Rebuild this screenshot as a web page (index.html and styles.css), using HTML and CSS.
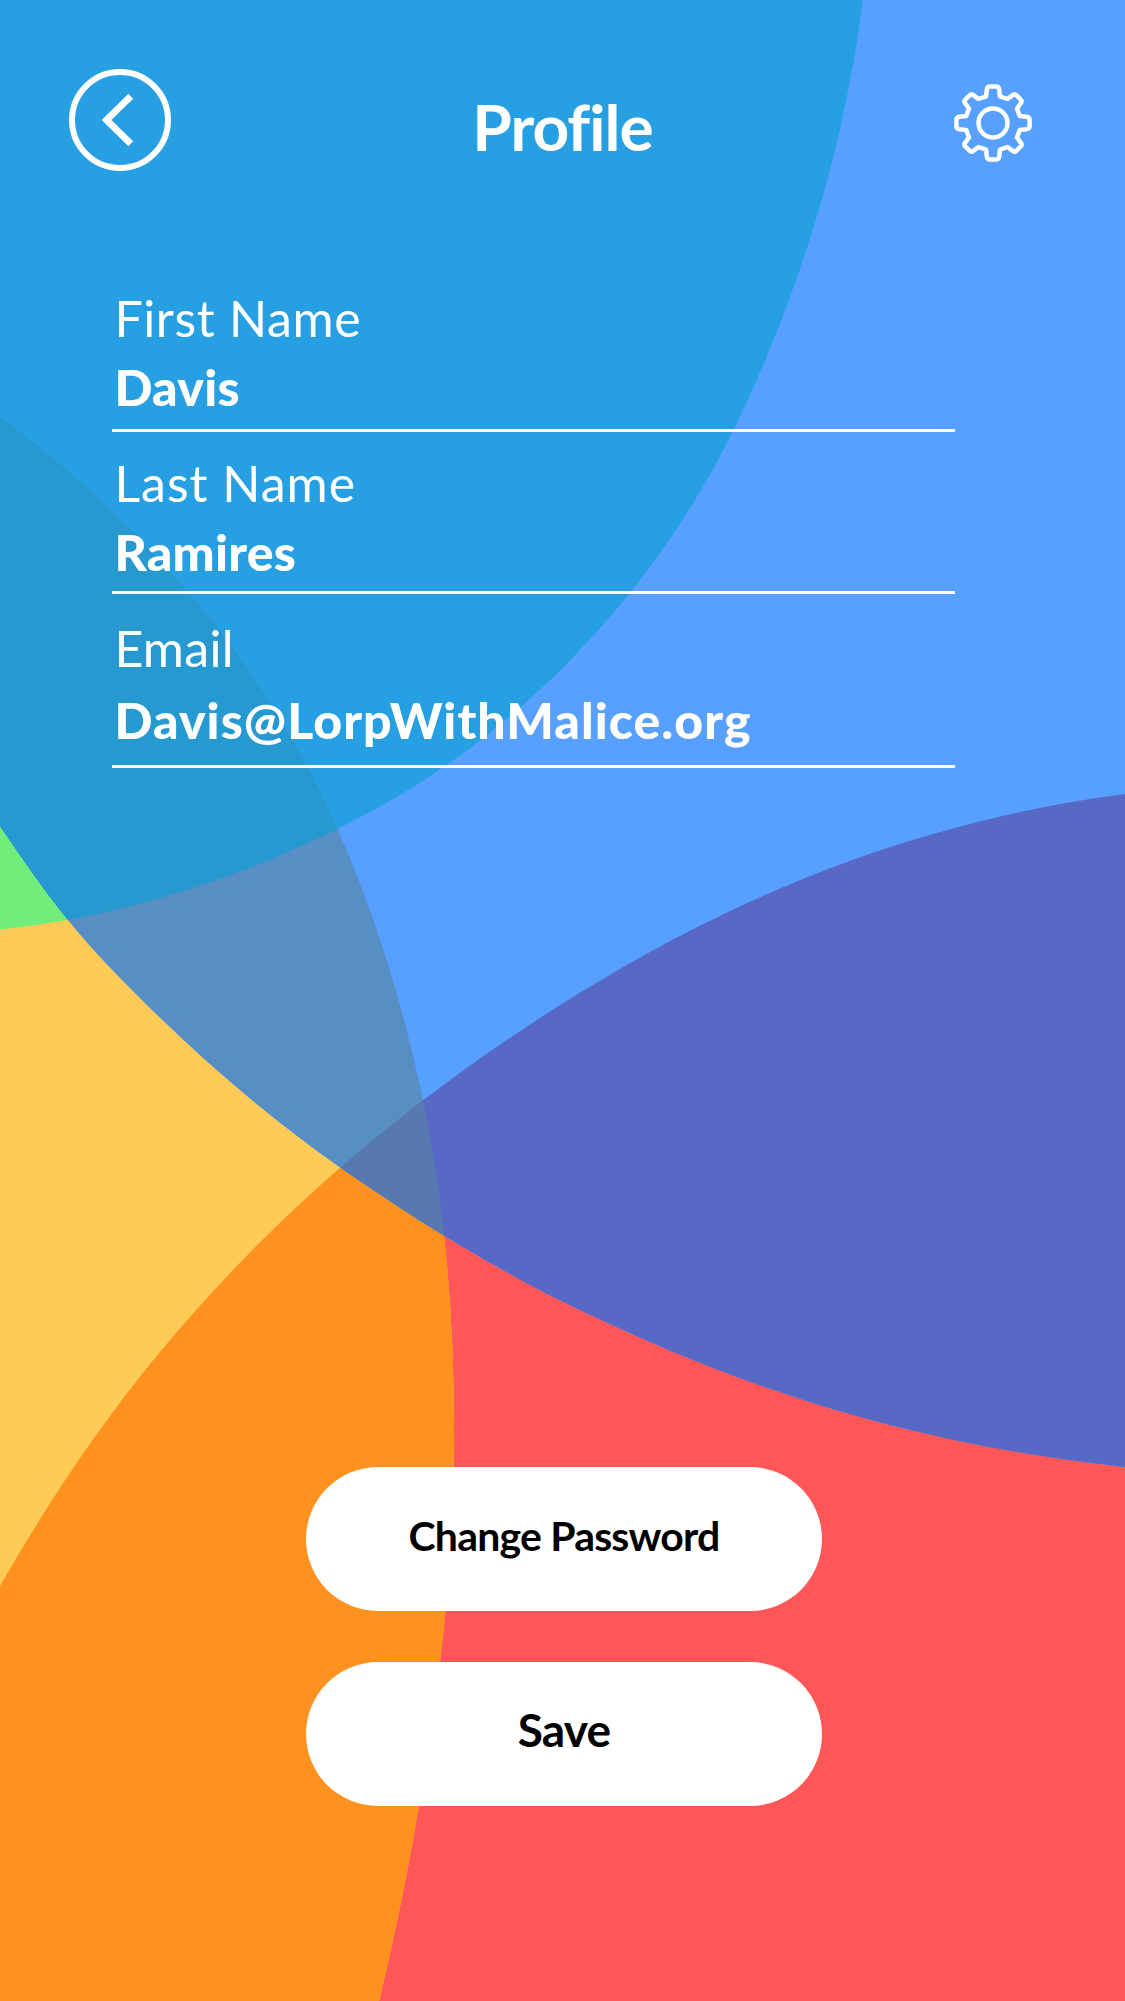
FILE: index.html
```html
<!DOCTYPE html>
<html lang="en">
<head>
  <meta charset="utf-8">
  <title>Profile</title>
  <link rel="stylesheet" href="styles.css">
</head>
<body>
  <div class="screen">
    <svg class="backdrop" viewBox="0 0 1125 2001" aria-hidden="true">
      <defs>
        <path id="green" d="M0 0H863C844 149 799 295 734 429C663 575 543 710 400 795C279 866 139 915 0 929.500Z"/>
        <path id="yellow" d="M0 417C72 469 137 532 195 600C253 668 302 748 338 830C394 958 429 1097 444 1236C451 1299 454 1362 454 1425C454 1504 450 1582 440 1662C426 1775 406 1890 379 2001H0Z"/>
        <path id="blue" d="M0 0V826C31 872 64 919 103 960C175 1036 255 1108 341 1168C417 1221 498 1271 582 1311C667 1352 755 1386.500 845 1412.700C936 1439 1031 1457 1125 1467V0Z"/>
        <path id="red" d="M0 1586C47 1504 100 1424 160 1352C215 1286 276 1223 341 1167C417 1101 500 1041.500 586 989C669 938.500 756 895 847 862C936 829.500 1031 806 1125 794V2001H0Z"/>
        <clipPath id="in-yellow"><use href="#yellow"/></clipPath>
        <clipPath id="in-blue"><use href="#blue"/></clipPath>
      </defs>
      <use href="#red" fill="#ff5757"/>
      <use href="#yellow" fill="#fecb57"/>
      <g clip-path="url(#in-yellow)">
        <use href="#red" fill="#ff921e"/>
        <use href="#green" fill="#70ee79"/>
      </g>
      <use href="#blue" fill="#57a0ff"/>
      <g clip-path="url(#in-blue)">
        <use href="#red" fill="#5768c5"/>
        <use href="#green" fill="#27a0e3"/>
        <use href="#yellow" fill="#578ec4"/>
        <g clip-path="url(#in-yellow)">
          <use href="#red" fill="#5779b0"/>
          <use href="#green" fill="#2699d0"/>
        </g>
      </g>
    </svg>

    <header class="topbar">
      <a class="back" href="#" aria-label="Back">
        <svg viewBox="0 0 102 102" width="102" height="102">
          <circle cx="51" cy="51" r="48" stroke-width="6"/>
          <path d="M61.800 27.300L37.500 51L61.800 74.700" stroke-width="6.800"/>
        </svg>
      </a>
      <h1 class="title">Profile</h1>
      <a class="settings" href="#" aria-label="Settings">
        <svg viewBox="-39 -39 78 78" width="78" height="78">
          <circle r="14.500" stroke-width="4.500"/>
          <path stroke-width="4.500" stroke-linejoin="round" d="M-6.900 -26.700L-6.200 -33.500Q-5.800 -36.600 -3 -36.600H3Q5.800 -36.600 6.200 -33.500L6.900 -26.700L14.500 -24L19.800 -27.900Q21.800 -29.400 23.500 -27.700L27.700 -23.500Q29.400 -21.800 27.900 -19.800L24 -14.500L26.700 -6.900L33.500 -6.200Q36.600 -5.800 36.600 -3V3Q36.600 5.800 33.500 6.200L26.700 6.900L24 14.500L27.900 19.800Q29.400 21.800 27.700 23.500L23.500 27.700Q21.800 29.400 19.800 27.900L14.500 24L6.900 26.700L6.200 33.500Q5.800 36.600 3 36.600H-3Q-5.800 36.600 -6.200 33.500L-6.900 26.700L-14.500 24L-19.800 27.900Q-21.800 29.400 -23.500 27.700L-27.700 23.500Q-29.400 21.800 -27.900 19.800L-24 14.500L-26.700 6.900L-33.500 6.200Q-36.600 5.800 -36.600 3V-3Q-36.600 -5.800 -33.500 -6.200L-26.700 -6.900L-24 -14.500L-27.900 -19.800Q-29.400 -21.800 -27.700 -23.500L-23.500 -27.700Q-21.800 -29.400 -19.800 -27.900L-14.500 -24Z"/>
        </svg>
      </a>
    </header>

    <main class="content">
      <dl class="fields">
        <div class="field first-name">
          <dt class="label">First Name</dt>
          <dd class="value">Davis</dd>
        </div>
        <div class="field last-name">
          <dt class="label">Last Name</dt>
          <dd class="value">Ramires</dd>
        </div>
        <div class="field email">
          <dt class="label">Email</dt>
          <dd class="value">Davis@LorpWithMalice.org</dd>
        </div>
      </dl>
      <div class="actions">
        <button class="button password" type="button">Change Password</button>
        <button class="button save" type="button">Save</button>
      </div>
    </main>
  </div>
</body>
</html>
```
FILE: styles.css
```css
* {
  box-sizing: border-box;
}

body {
  margin: 0;
  font-family: Lato, "Open Sans", sans-serif;
  font-variant-ligatures: none;
  color: #fff;
}

.screen {
  position: relative;
  display: flex;
  flex-direction: column;
  width: 1125px;
  height: 2001px;
  overflow: hidden;
}

/* Overlapping colour discs behind the whole screen */
.backdrop {
  position: absolute;
  inset: 0;
  z-index: -1;
  width: 100%;
  height: 100%;
}

.topbar {
  display: grid;
  grid-template-columns: 102px 1fr 78px;
  align-items: start;
  height: 288px;
  padding: 69px 93px 0 69px;
}

.topbar svg {
  display: block;
  fill: none;
  stroke: #fff;
}

.title {
  margin: 17px 0 0;
  font-size: 64px;
  font-weight: 700;
  line-height: 82px;
  text-align: center;
  letter-spacing: -1px;
}

.settings {
  margin-top: 15px;
}

.content {
  display: flex;
  flex: 1;
  flex-direction: column;
  justify-content: space-between;
  padding-bottom: 195px;
}

.fields {
  display: flex;
  flex-direction: column;
  width: 843px;
  margin: 0 0 0 112.400px;
}

.field {
  display: flex;
  flex-direction: column;
  gap: 9px;
  padding: 0 0 12px 2px;
  border-bottom: 3px solid #fff;
}

.last-name {
  padding-top: 21px;
  padding-bottom: 9px;
}

.email {
  gap: 12px;
  padding-top: 24px;
  padding-bottom: 15px;
}

.label,
.value {
  margin: 0;
  font-size: 50px;
  line-height: 60px;
}

.label {
  letter-spacing: 0.650px;
}

.last-name .label {
  letter-spacing: 1px;
}

.email .label {
  letter-spacing: 0.300px;
}

.value {
  font-weight: 900;
  letter-spacing: 0.250px;
}

.email .value {
  letter-spacing: 1.050px;
}

.actions {
  display: flex;
  flex-direction: column;
  gap: 51px;
  width: 516px;
  margin-left: 306px;
}

.button {
  height: 144px;
  padding: 0 0 8px;
  border: 0;
  border-radius: 72px;
  background: #fff;
  color: #000;
  font-family: inherit;
  font-size: 41px;
  font-weight: 700;
  letter-spacing: -0.800px;
}

.save {
  padding-bottom: 10px;
  font-size: 46px;
}
```
